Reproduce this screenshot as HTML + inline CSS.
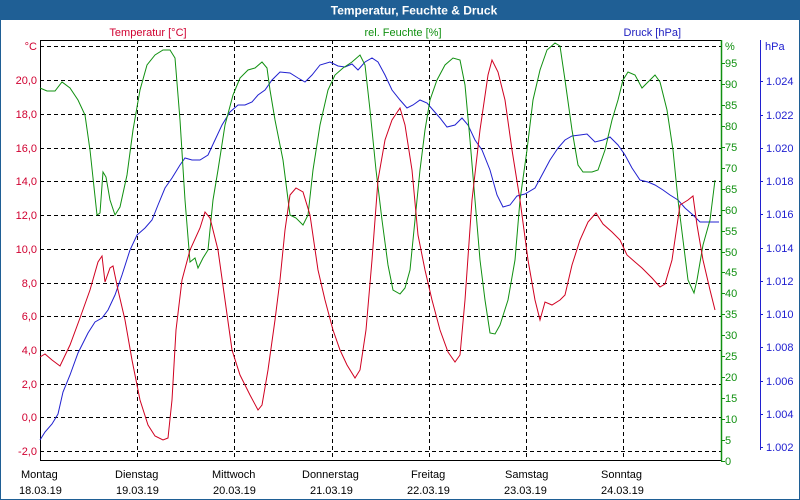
<!DOCTYPE html>
<html><head><meta charset="utf-8"><style>
html,body{margin:0;padding:0;background:#fff}
body{width:800px;height:500px;overflow:hidden;position:relative;font-family:"Liberation Sans","DejaVu Sans",sans-serif}
</style></head><body>
<svg width="800" height="500" viewBox="0 0 800 500" xmlns="http://www.w3.org/2000/svg" style="position:absolute;left:0;top:0">
<rect x="0" y="0" width="800" height="500" fill="#fff"/>
<rect x="0.5" y="0.5" width="799" height="499" fill="none" stroke="#1f5f95" stroke-width="1"/>
<rect x="0" y="0" width="800" height="20" fill="#1f5f95"/>
<text x="414" y="14.5" fill="#fff" font-size="12" font-weight="bold" text-anchor="middle">Temperatur, Feuchte &amp; Druck</text>
<g font-size="11">
<text x="148" y="36" fill="#d00030" text-anchor="middle">Temperatur [°C]</text>
<text x="403" y="36" fill="#109010" text-anchor="middle">rel. Feuchte [%]</text>
<text x="681" y="36" fill="#2020c0" text-anchor="end">Druck [hPa]</text>
</g>
<!-- grid -->
<g stroke="#000" stroke-width="1" stroke-dasharray="4,3" fill="none">
<path d="M40 46.5H721M40 80.5H721M40 114.5H721M40 148.5H721M40 181.5H721M40 215.5H721M40 249.5H721M40 283.5H721M40 316.5H721M40 350.5H721M40 384.5H721M40 417.5H721M40 451.5H721"/>
<path d="M137.5 40V460M234.5 40V460M332.5 40V460M429.5 40V460M526.5 40V460M623.5 40V460"/>
</g>
<path d="M40 40.5H721M40.5 40V461M40 460.5H721" stroke="#000" fill="none"/>
<!-- left axis labels -->
<g font-size="11" fill="#d00030" text-anchor="end">
<text x="37" y="50">°C</text>
<text x="37" y="84">20,0</text><text x="37" y="118">18,0</text><text x="37" y="152">16,0</text><text x="37" y="185">14,0</text><text x="37" y="219">12,0</text><text x="37" y="253">10,0</text><text x="37" y="287">8,0</text><text x="37" y="320">6,0</text><text x="37" y="354">4,0</text><text x="37" y="388">2,0</text><text x="37" y="421">0,0</text><text x="37" y="455">-2,0</text>
</g>
<!-- green axis -->
<path d="M721.5 40V461" stroke="#109010" stroke-width="1.5"/>
<g stroke="#109010"><path d="M721 461.5h4M721 440.5h4M721 419.5h4M721 398.5h4M721 377.5h4M721 356.5h4M721 335.5h4M721 314.5h4M721 293.5h4M721 272.5h4M721 252.5h4M721 231.5h4M721 210.5h4M721 189.5h4M721 168.5h4M721 147.5h4M721 126.5h4M721 105.5h4M721 84.5h4M721 63.5h4"/></g>
<g font-size="11" fill="#109010">
<text x="725" y="50">%</text>
<text x="725" y="465">0</text><text x="725" y="444">5</text><text x="725" y="423">10</text><text x="725" y="402">15</text><text x="725" y="381">20</text><text x="725" y="360">25</text><text x="725" y="339">30</text><text x="725" y="318">35</text><text x="725" y="297">40</text><text x="725" y="276">45</text><text x="725" y="256">50</text><text x="725" y="235">55</text><text x="725" y="214">60</text><text x="725" y="193">65</text><text x="725" y="172">70</text><text x="725" y="151">75</text><text x="725" y="130">80</text><text x="725" y="109">85</text><text x="725" y="88">90</text><text x="725" y="67">95</text>
</g>
<!-- blue axis -->
<path d="M760.5 40V450" stroke="#2020d0" stroke-width="1"/>
<g stroke="#2020d0"><path d="M760 447.5h3M760 414.5h3M760 381.5h3M760 347.5h3M760 314.5h3M760 281.5h3M760 248.5h3M760 214.5h3M760 181.5h3M760 148.5h3M760 115.5h3M760 81.5h3"/></g>
<g font-size="11" fill="#2020d0">
<text x="765" y="50">hPa</text>
<text x="766" y="451">1.002</text><text x="766" y="418">1.004</text><text x="766" y="385">1.006</text><text x="766" y="351">1.008</text><text x="766" y="318">1.010</text><text x="766" y="285">1.012</text><text x="766" y="252">1.014</text><text x="766" y="218">1.016</text><text x="766" y="185">1.018</text><text x="766" y="152">1.020</text><text x="766" y="119">1.022</text><text x="766" y="85">1.024</text>
</g>
<!-- days -->
<g font-size="11" fill="#000">
<text x="21" y="478">Montag</text><text x="19" y="494">18.03.19</text>
<text x="115" y="478">Dienstag</text><text x="116" y="494">19.03.19</text>
<text x="212" y="478">Mittwoch</text><text x="213" y="494">20.03.19</text>
<text x="302" y="478">Donnerstag</text><text x="310" y="494">21.03.19</text>
<text x="411" y="478">Freitag</text><text x="407" y="494">22.03.19</text>
<text x="505" y="478">Samstag</text><text x="504" y="494">23.03.19</text>
<text x="601" y="478">Sonntag</text><text x="601" y="494">24.03.19</text>
</g>
<!-- curves -->
<polyline fill="none" stroke="#2020d0" stroke-width="1" points="40,440 45,432 52,424 58,414 63,392 70,375 78,353 88,333 95,322 102,318 108,310 115,295 122,275 130,250 137,235 145,228 152,220 158,205 165,188 172,178 180,165 185,158 192,160 200,160 208,155 215,140 222,125 230,112 238,105 245,105 252,102 258,95 265,90 272,80 280,72 290,73 298,78 305,82 312,75 320,65 330,62 338,66 345,67 352,64 358,70 365,62 372,58 378,62 385,75 392,90 400,100 407,108 413,105 420,100 427,103 433,110 440,118 447,127 455,125 462,118 468,125 475,140 482,150 490,170 497,195 503,207 510,205 517,196 525,194 535,188 542,175 550,160 558,148 565,140 572,136 580,135 587,134 595,142 603,140 610,137 618,145 625,155 632,168 640,180 648,182 655,185 663,190 670,195 678,200 685,208 693,215 700,222 707,222 713,222 719,222"/>
<polyline fill="none" stroke="#109010" stroke-width="1" points="40,88 47,91 55,91 62,82 70,88 78,100 85,115 90,150 97,215 100,213 103,172 106,177 110,200 115,215 120,207 127,175 133,130 140,90 147,65 155,55 163,50 170,50 175,58 180,120 185,200 190,262 195,258 198,268 203,258 208,250 213,200 218,170 225,125 233,95 240,78 248,70 255,68 262,62 267,68 270,90 275,120 283,160 290,215 296,218 303,225 308,215 313,170 320,125 328,90 335,75 343,68 352,62 360,55 365,65 370,110 376,170 382,220 388,265 393,290 400,294 405,288 410,270 415,220 420,170 425,130 430,100 437,80 445,65 453,58 460,60 465,85 470,140 475,200 480,260 485,300 490,333 495,334 500,325 508,300 515,260 520,200 527,150 533,100 540,70 547,50 555,43 560,46 565,80 572,130 578,165 583,172 592,172 598,170 605,150 612,120 618,100 623,80 628,72 635,75 642,88 648,82 655,75 660,82 667,110 673,150 678,200 683,240 688,280 694,293 697,280 703,245 710,220 715,180"/>
<polyline fill="none" stroke="#d00020" stroke-width="1" points="40,357 45,354 52,360 60,366 70,345 80,318 90,290 98,262 102,256 105,282 110,268 113,266 118,290 125,320 132,360 140,400 148,425 155,436 163,440 168,438 172,400 176,330 182,280 190,250 200,228 205,212 210,218 218,250 225,300 232,350 240,375 250,395 258,410 262,405 268,370 275,320 280,280 285,230 290,195 296,188 303,192 310,215 318,270 325,300 333,330 340,350 347,365 355,378 360,370 366,330 372,260 378,180 385,140 392,120 400,108 405,125 412,170 418,235 425,270 432,300 440,330 448,352 455,362 460,355 465,300 472,200 480,130 488,75 492,60 498,72 505,100 512,150 520,200 528,260 535,300 540,320 545,302 552,305 560,300 565,295 572,265 580,240 588,222 596,213 603,224 612,232 620,240 627,255 635,262 642,268 652,278 660,287 665,284 672,260 680,205 688,200 693,196 697,225 703,260 710,290 715,310"/>
</svg>
</body></html>
